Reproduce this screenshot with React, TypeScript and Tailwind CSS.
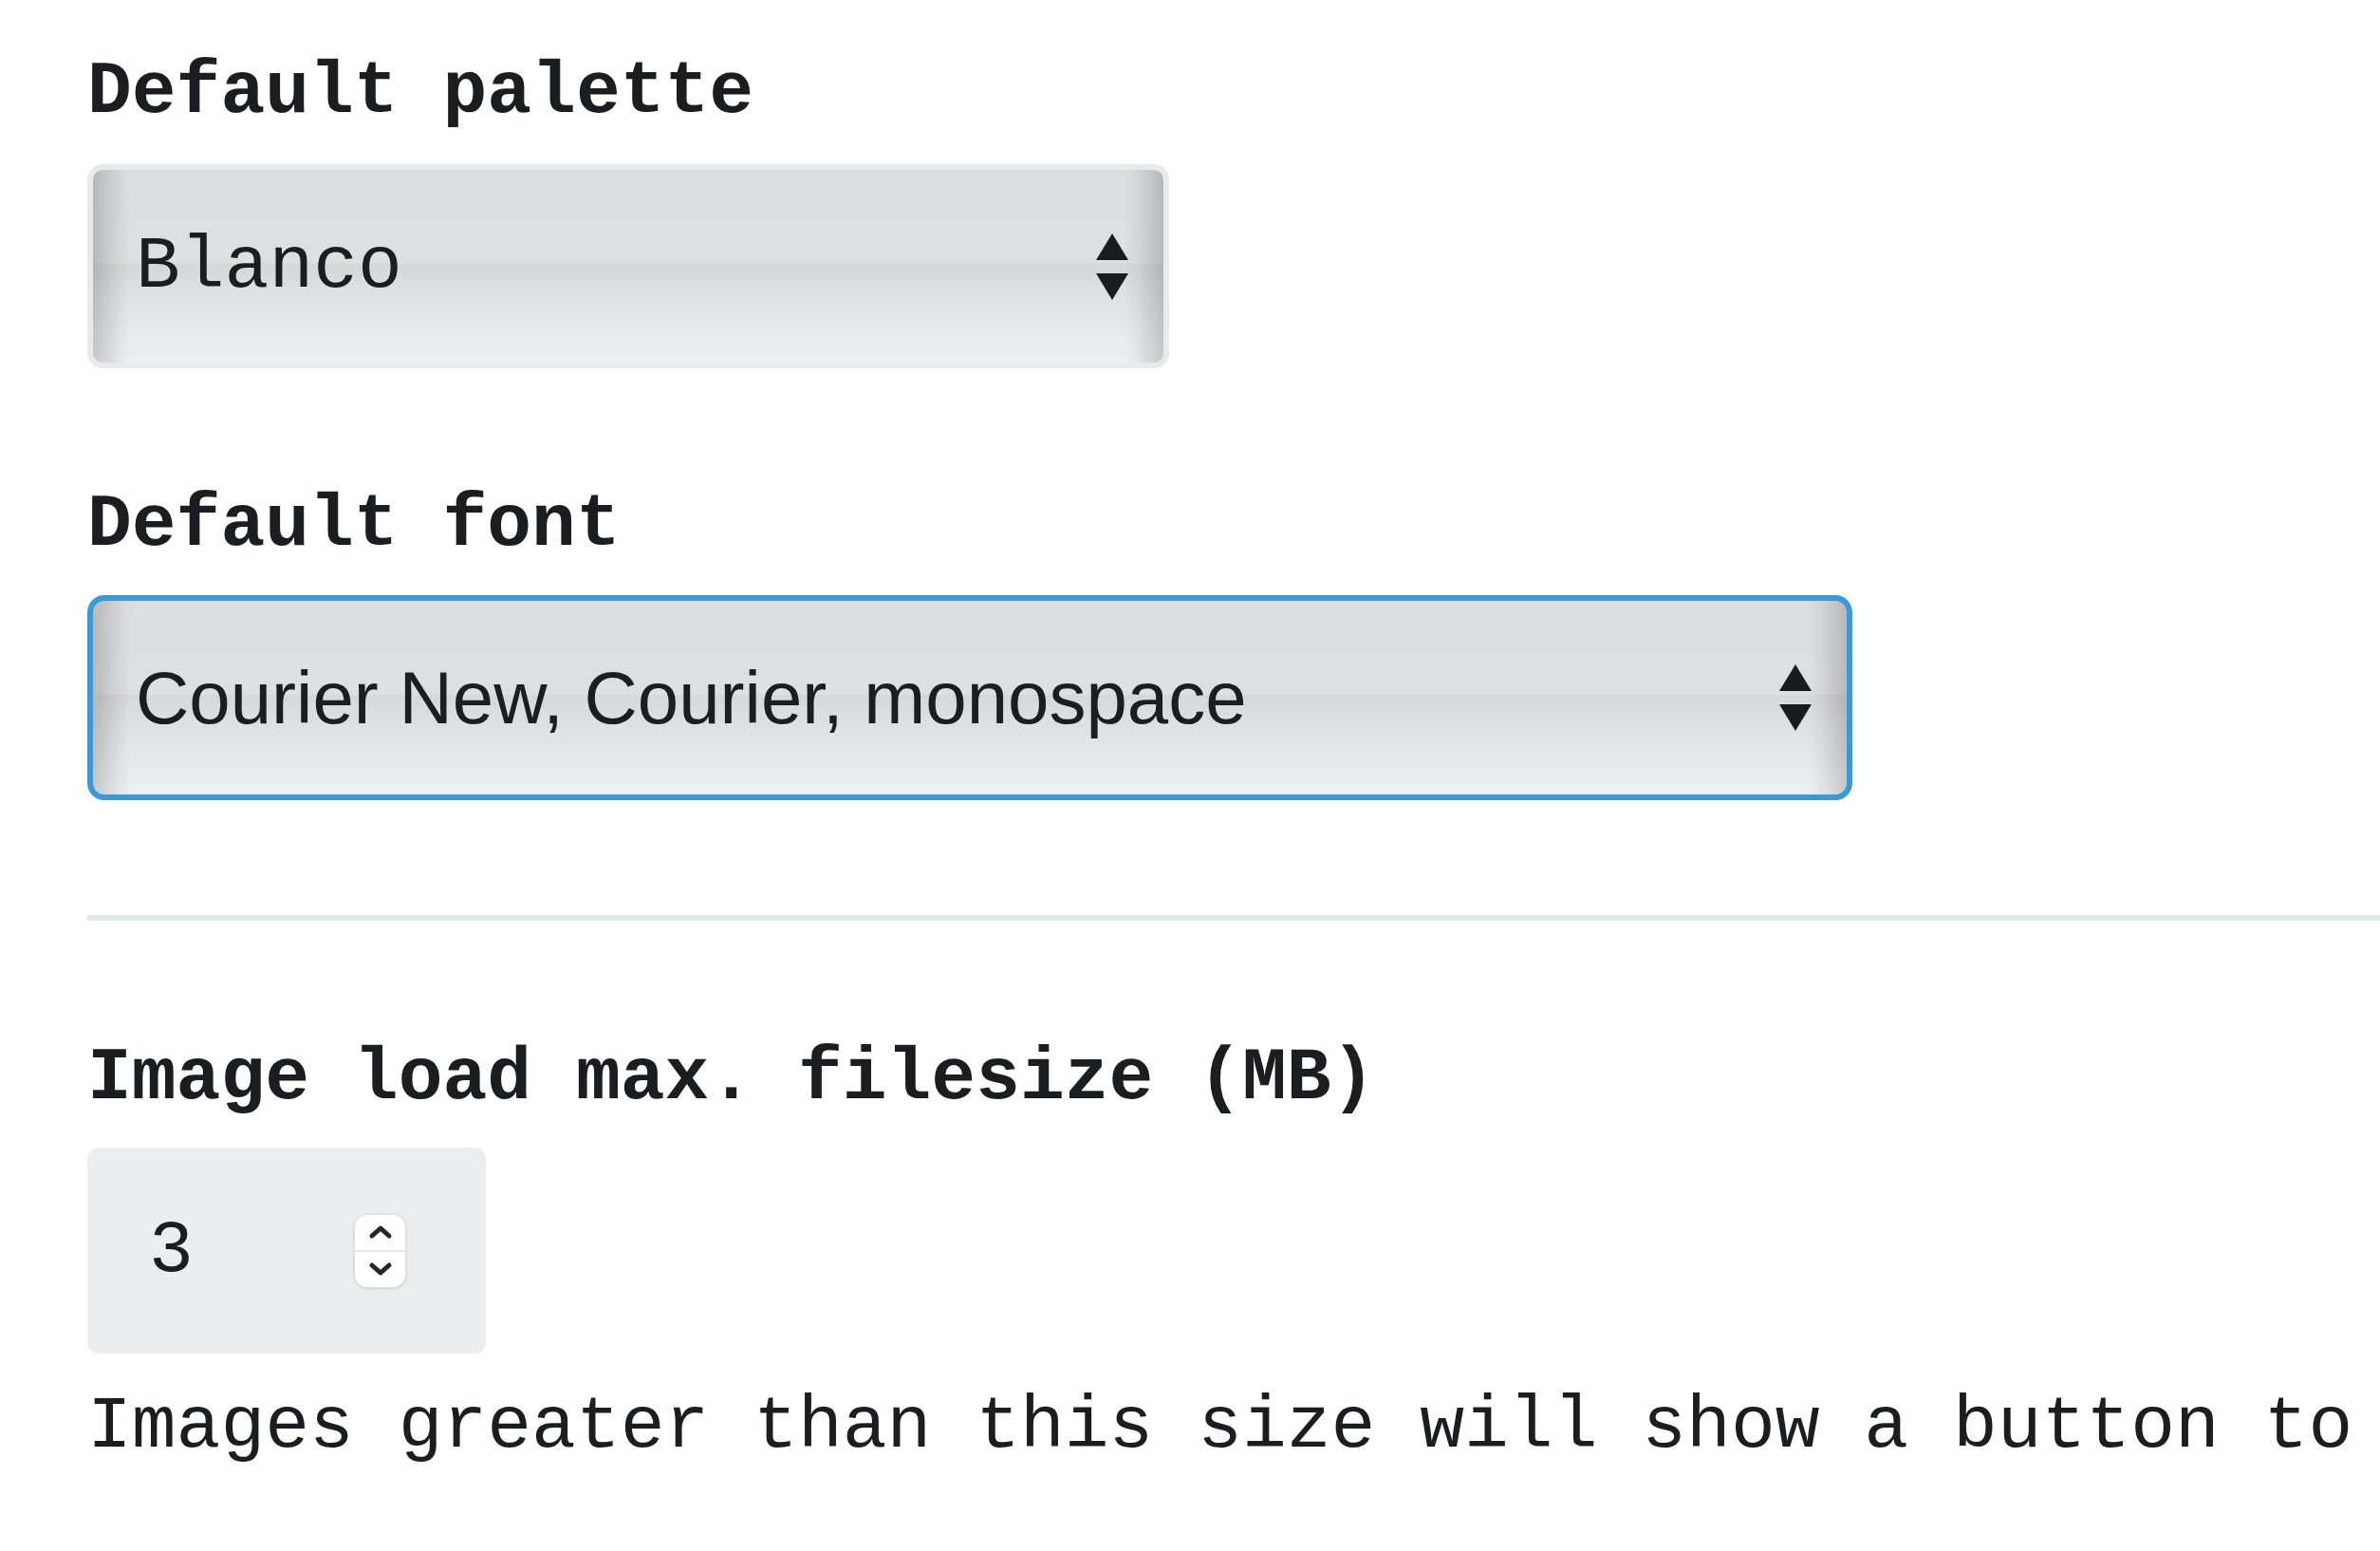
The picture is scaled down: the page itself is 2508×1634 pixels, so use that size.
import React from 'react'

const Arrows: React.FC = () => (
  <div className="flex flex-col items-center gap-[14px]">
    <svg width="34" height="28" viewBox="0 0 34 28">
      <path d="M17 0 L34 28 L0 28 Z" fill="#181c1e" />
    </svg>
    <svg width="34" height="28" viewBox="0 0 34 28">
      <path d="M0 0 L34 0 L17 28 Z" fill="#181c1e" />
    </svg>
  </div>
)

const glossy =
  'bg-[linear-gradient(to_right,rgba(0,0,0,0.17),rgba(0,0,0,0.04)_28px,rgba(0,0,0,0)_40px,rgba(0,0,0,0)_calc(100%_-_40px),rgba(0,0,0,0.04)_calc(100%_-_28px),rgba(0,0,0,0.17)),linear-gradient(to_bottom,#dbdde0,#dde0e1_48%,#d5d8da_49%,#dde0e2_62%,#eef1f2)]'

export default function App() {
  return (
    <div className="min-h-screen overflow-hidden bg-white pl-[92px] pt-[58px] font-['Liberation_Mono','Courier_New',monospace] text-[#1a1e20]">
      <h2 className="whitespace-nowrap text-[78px] font-bold leading-[78px]">Default palette</h2>

      <div className={`mt-[37px] flex h-[215px] w-[1140px] items-center rounded-[16px] border-[6px] border-[#e8ebec] pl-[45px] pr-[37px] ${glossy}`}>
        <span className="flex-1 text-[78px] leading-[78px]">Blanco</span>
        <Arrows />
      </div>

      <h2 className="mt-[126px] whitespace-nowrap text-[78px] font-bold leading-[78px]">Default font</h2>

      <div className={`mt-[35px] flex h-[216px] w-[1860px] items-center rounded-[18px] border-[6px] border-[#3a9ad9] pl-[45px] pr-[37px] ${glossy}`}>
        <span className="flex-1 font-['Liberation_Sans',Arial,sans-serif] text-[78px] leading-[78px]">
          Courier New, Courier, monospace
        </span>
        <Arrows />
      </div>

      <div className="mt-[121px] h-[6px] bg-[#e3e8e8]" />

      <h2 className="mt-[127px] whitespace-nowrap text-[78px] font-bold leading-[78px]">Image load max. filesize (MB)</h2>

      <div className="mt-[34px] flex h-[217px] w-[420px] items-center rounded-[12px] bg-[#ebeeef] pl-[65px] pr-[84px]">
        <span className="flex-1 text-[78px] leading-[78px]">3</span>
        <div className="flex h-[78px] w-[55px] flex-col overflow-hidden rounded-[14px] border border-[#dcdfe0] bg-white shadow-[0_1px_3px_rgba(0,0,0,0.12)]">
          <div className="flex flex-1 items-center justify-center">
            <svg width="28" height="16" viewBox="0 0 28 16">
              <path d="M5 12 L14 4 L23 12" fill="none" stroke="#22272a" strokeWidth="5" strokeLinecap="round" strokeLinejoin="round" />
            </svg>
          </div>
          <div className="h-[2px] bg-[#e2e5e6]" />
          <div className="flex flex-1 items-center justify-center">
            <svg width="28" height="16" viewBox="0 0 28 16">
              <path d="M5 4 L14 12 L23 4" fill="none" stroke="#22272a" strokeWidth="5" strokeLinecap="round" strokeLinejoin="round" />
            </svg>
          </div>
        </div>
      </div>

      <p className="mt-[38px] whitespace-nowrap text-[78px] leading-[78px]">
        Images greater than this size will show a button to
      </p>
    </div>
  )
}
